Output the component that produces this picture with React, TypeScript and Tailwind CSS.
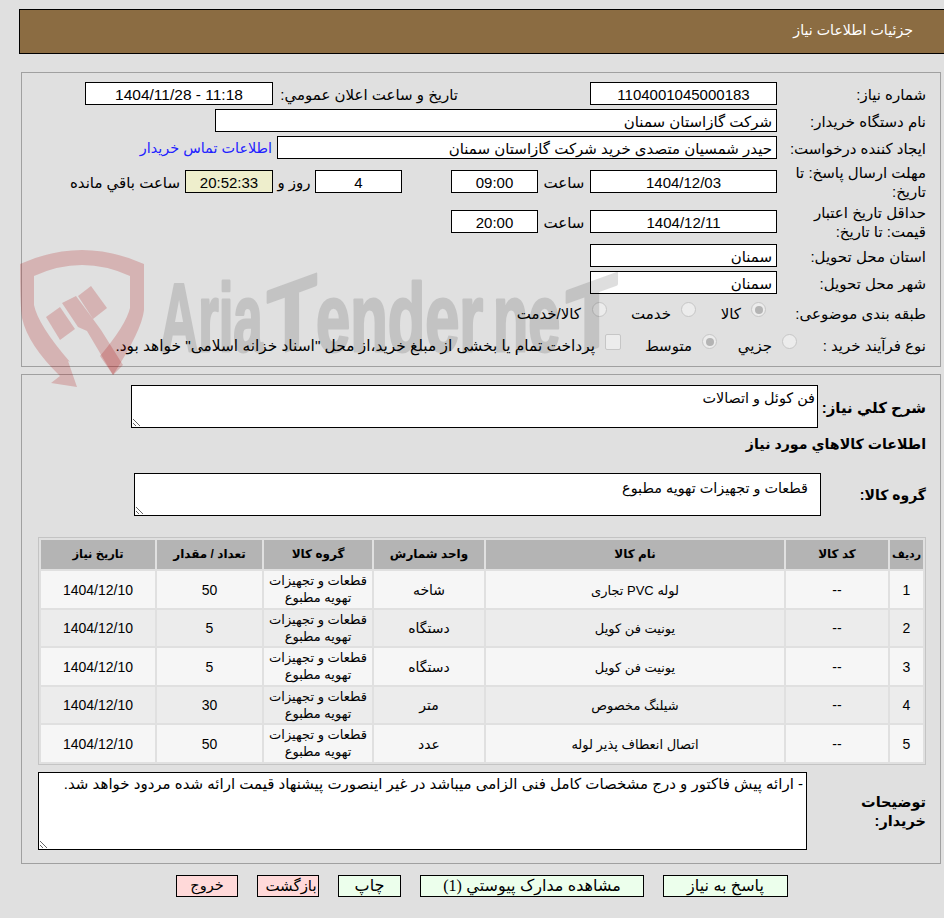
const FIELD = 'flex items-center bg-white border border-black h-[23px] shrink-0 pt-[2px]'

function Field({ className, mono, children }: { className: string; mono?: boolean; children: React.ReactNode }) {
  return (
    <div className={`${FIELD} ${className} ${mono ? 'justify-center' : 'pr-1'}`}>{children}</div>
  )
}

function Label({ className, children }: { className: string; children: React.ReactNode }) {
  return <div className={`shrink-0 pt-[2px] ${className}`}>{children}</div>
}

function Radio({ checked, className }: { checked?: boolean; className?: string }) {
  return (
    <span className={`flex items-center justify-center w-[15px] h-[15px] rounded-full border border-[#c6c6c6] bg-[#ececec] shrink-0 -mt-[5px] ${className ?? ''}`}>
      {checked && <span className="w-[8px] h-[8px] rounded-full bg-[#b4b4b4]" />}
    </span>
  )
}

const rows = [
  { id: 1, name: 'لوله PVC تجاری', unit: 'شاخه', qty: 50 },
  { id: 2, name: 'یونیت فن کویل', unit: 'دستگاه', qty: 5 },
  { id: 3, name: 'یونیت فن کویل', unit: 'دستگاه', qty: 5 },
  { id: 4, name: 'شیلنگ مخصوص', unit: 'متر', qty: 30 },
  { id: 5, name: 'اتصال انعطاف پذیر لوله', unit: 'عدد', qty: 50 },
]

function Watermark() {
  return (
    <div dir="ltr" className="absolute left-0 top-0 pointer-events-none">
      <svg width="944" height="918" viewBox="0 0 944 918">
        {/* shield */}
        <path
          fill="#a80000"
          fillOpacity="0.2"
          fillRule="evenodd"
          d="M20 264 Q82 236 144 264 L144 310 Q142 330 113 375 L100 356 Q126 325 130 308 L130 276 Q82 254 34 276 L34 305 Q38 325 70 362 L68 361 L77 387 L51 383 L60 376 Q28 345 22 318 Q20 305 20 264 Z"
        />
        <path fill="#a80000" fillOpacity="0.2" d="M46 317 L60 307 L75 329 L60 340 Z" />
        <path fill="#a80000" fillOpacity="0.2" d="M62 303 L76 296 L93 319 L101 330 L123 365 L113 375 L87 331 L78 327 Z" />
        <path fill="#a80000" fillOpacity="0.2" d="M78 296 L91 286 L107 308 L93 319 Z" />
        {/* wordmark */}
        <g fontFamily="'Liberation Sans', sans-serif" fontWeight="700" fontSize="96" fill="#000" stroke="#000" strokeWidth="3" strokeLinejoin="round" opacity="0.125">
          <text transform="translate(160 351) scale(0.55 1)">Aria</text>
          <text transform="translate(267 358) skewY(-20) scale(0.85 1)">T</text>
          <text transform="translate(316 351) scale(0.64 1)">ender</text>
          <text transform="translate(493 351) scale(0.6 1)">ne</text>
          <text transform="translate(566 358) skewY(-20) scale(0.88 1)">T</text>
        </g>
      </svg>
    </div>
  )
}

export default function App() {
  return (
    <div dir="rtl" className="relative min-h-[918px] bg-[#e0e0e0] text-[15px] leading-[19px] text-black overflow-hidden font-['Liberation_Sans','DejaVu_Sans',sans-serif]">
      <div className="pt-[9px] pl-[19px]">
        <div className="h-[45px] bg-[#8b6c42] border border-black border-r-0 flex items-center pr-[31px] pb-[2px] text-white text-[14.2px]">
          جزئیات اطلاعات نیاز
        </div>
      </div>

      {/* main info */}
      <div className="mt-[18px] ml-[21px] mr-[3px] border border-[#a0a0a0] pt-[9px] pr-[14px] pb-[8px] flex flex-col gap-[4px]">
        <div className="flex items-center h-[23px]">
          <Label className="w-[149px]">شماره نیاز:</Label>
          <Field className="w-[187px]" mono>1104001045000183</Field>
          <div className="w-[132px] shrink-0" />
          <Label className="w-[185px]">تاريخ و ساعت اعلان عمومي:</Label>
          <Field className="w-[188px] text-[15.5px]" mono><span dir="ltr">1404/11/28 - 11:18</span></Field>
        </div>
        <div className="flex items-center h-[23px]">
          <Label className="w-[149px]">نام دستگاه خریدار:</Label>
          <Field className="w-[562px]">شرکت گازاستان سمنان</Field>
        </div>
        <div className="flex items-center h-[23px]">
          <Label className="w-[149px]">ایجاد کننده درخواست:</Label>
          <Field className="w-[500px]">حیدر شمسیان متصدی خرید شرکت گازاستان سمنان</Field>
          <a className="mr-[5px] pt-[2px] text-[14.4px] text-[#2222ff]">اطلاعات تماس خریدار</a>
        </div>
        <div className="flex items-center h-[36px]">
          <Label className="w-[149px]">مهلت ارسال پاسخ: تا<br />تاریخ:</Label>
          <Field className="w-[187px]" mono>1404/12/03</Field>
          <Label className="w-[52px] text-center">ساعت</Label>
          <Field className="w-[87px]" mono>09:00</Field>
          <div className="w-[49px] shrink-0" />
          <Field className="w-[87px]" mono>4</Field>
          <Label className="w-[42px] text-center">روز و</Label>
          <Field className="w-[88px] !bg-[#eeeecc]" mono>20:52:33</Field>
          <span className="mr-[5px] pt-[2px]">ساعت باقي مانده</span>
        </div>
        <div className="flex items-center h-[36px]">
          <Label className="w-[149px]">حداقل تاریخ اعتبار<br />قیمت: تا تاریخ:</Label>
          <Field className="w-[187px]" mono>1404/12/11</Field>
          <Label className="w-[52px] text-center">ساعت</Label>
          <Field className="w-[87px]" mono>20:00</Field>
        </div>
        <div className="flex items-center h-[23px] mt-[1px]">
          <Label className="w-[149px]">استان محل تحویل:</Label>
          <Field className="w-[187px]">سمنان</Field>
        </div>
        <div className="flex items-center h-[23px]">
          <Label className="w-[149px]">شهر محل تحویل:</Label>
          <Field className="w-[187px]">سمنان</Field>
        </div>
        <div className="flex items-center h-[28px]">
          <Label className="w-[160px]">طبقه بندی موضوعی:</Label>
          <Radio checked />
          <span className="mr-[10px] pt-[2px] w-[20px] whitespace-nowrap">کالا</span>
          <Radio className="mr-[25px]" />
          <span className="mr-[10px] pt-[2px] w-[40px] whitespace-nowrap">خدمت</span>
          <Radio className="mr-[24px]" />
          <span className="mr-[11px] pt-[2px] whitespace-nowrap">کالا/خدمت</span>
        </div>
        <div className="flex items-center h-[28px]">
          <Label className="w-[129px]">نوع فرآیند خرید :</Label>
          <Radio />
          <span className="mr-[10px] pt-[2px] w-[35px] whitespace-nowrap">جزیي</span>
          <Radio checked className="mr-[20px]" />
          <span className="mr-[10px] pt-[2px] w-[46px] whitespace-nowrap">متوسط</span>
          <span className="mr-[25px] -mt-[5px] w-[16px] h-[16px] rounded-[2px] border border-[#c6c6c6] bg-[#ececec] shrink-0" />
          <span className="mr-[10px] pt-[2px] text-[15.4px] whitespace-nowrap">پرداخت تمام یا بخشی از مبلغ خرید،از محل "اسناد خزانه اسلامی" خواهد بود.</span>
        </div>
      </div>

      {/* description, goods */}
      <div className="mt-[7px] ml-[21px] mr-[3px] border border-[#a0a0a0] pt-[10px] pr-[14px] pl-[16px] pb-[13px]">
        <div className="flex items-center">
          <Label className="w-[108px] font-bold">شرح کلي نياز:</Label>
          <textarea
            readOnly
            className="w-[687px] h-[43px] bg-white border border-black px-[2px] pt-[3px] text-[14.4px] leading-[18px] outline-none"
            defaultValue="فن کوئل و اتصالات"
          />
        </div>
        <div className="h-[45px] flex items-start pt-[7px] font-bold text-[14.2px]">اطلاعات کالاهاي مورد نياز</div>
        <div className="flex items-center">
          <Label className="w-[105px] font-bold text-[14px]">گروه کالا:</Label>
          <textarea
            readOnly
            className="w-[687px] h-[43px] bg-white border border-black pr-[12px] pt-[5px] text-[14.4px] leading-[18px] outline-none"
            defaultValue="قطعات و تجهیزات تهویه مطبوع"
          />
        </div>

        <table className="mt-[21px] w-[888px] table-fixed border border-[#c4c4c4] border-separate border-spacing-[2px] text-center">
          <colgroup>
            <col className="w-[33px]" />
            <col className="w-[102px]" />
            <col className="w-[298px]" />
            <col className="w-[110px]" />
            <col className="w-[108px]" />
            <col className="w-[105px]" />
            <col className="w-[114px]" />
          </colgroup>
          <thead>
            <tr className="h-[29px] bg-[#b4b4b4] text-[12px] font-bold">
              <th className="text-[11px]">ردیف</th>
              <th>کد کالا</th>
              <th>نام کالا</th>
              <th>واحد شمارش</th>
              <th>گروه کالا</th>
              <th>تعداد / مقدار</th>
              <th className="text-[11.5px]">تاریخ نیاز</th>
            </tr>
          </thead>
          <tbody>
            {rows.map((r) => (
              <tr key={r.id} className={`h-[36.5px] text-[13px] ${r.id % 2 === 0 ? 'bg-[#ececec]' : 'bg-[#f6f6f6]'}`}>
                <td className="pt-[2px] text-[14px]">{r.id}</td>
                <td className="pt-[2px] text-[14px]">--</td>
                <td className="pt-[2px]">{r.name}</td>
                <td className="pt-[2px] text-[14px]">{r.unit}</td>
                <td className="leading-[17px]">قطعات و تجهیزات<br />تهویه مطبوع</td>
                <td className="pt-[2px] text-[14px]">{r.qty}</td>
                <td className="pt-[2px] text-[14px]">1404/12/10</td>
              </tr>
            ))}
          </tbody>
        </table>

        <div className="flex items-center mt-[7px]">
          <Label className="w-[119px] font-bold text-[14.5px]">توضیحات<br />خریدار:</Label>
          <textarea
            readOnly
            className="w-[769px] h-[78px] bg-white border border-black px-[3px] pt-[2px] leading-[18px] outline-none"
            defaultValue="- ارائه پیش فاکتور و درج مشخصات کامل فنی الزامی میباشد در غیر اینصورت پیشنهاد قیمت ارائه شده مردود خواهد شد."
          />
        </div>
      </div>

      {/* actions */}
      <div className="mt-[11px] mr-[156px] flex gap-[19px] text-[16px]">
        <button className="w-[125px] h-[22px] border border-black bg-[#ecffec]">پاسخ به نیاز</button>
        <button className="w-[224px] h-[22px] border border-black bg-[#ecffec]">
          مشاهده مدارک پیوستي <span className="font-['Liberation_Serif',serif]">(1)</span>
        </button>
        <button className="w-[63px] h-[22px] border border-black bg-[#ecffec]">چاپ</button>
        <button className="w-[62px] h-[22px] border border-black bg-[#ffd9d9] pl-[6px] text-[15px]">بازگشت</button>
        <button className="w-[62px] h-[22px] border border-black bg-[#ffd9d9] text-[14.5px]">خروج</button>
      </div>

      <Watermark />
    </div>
  )
}
